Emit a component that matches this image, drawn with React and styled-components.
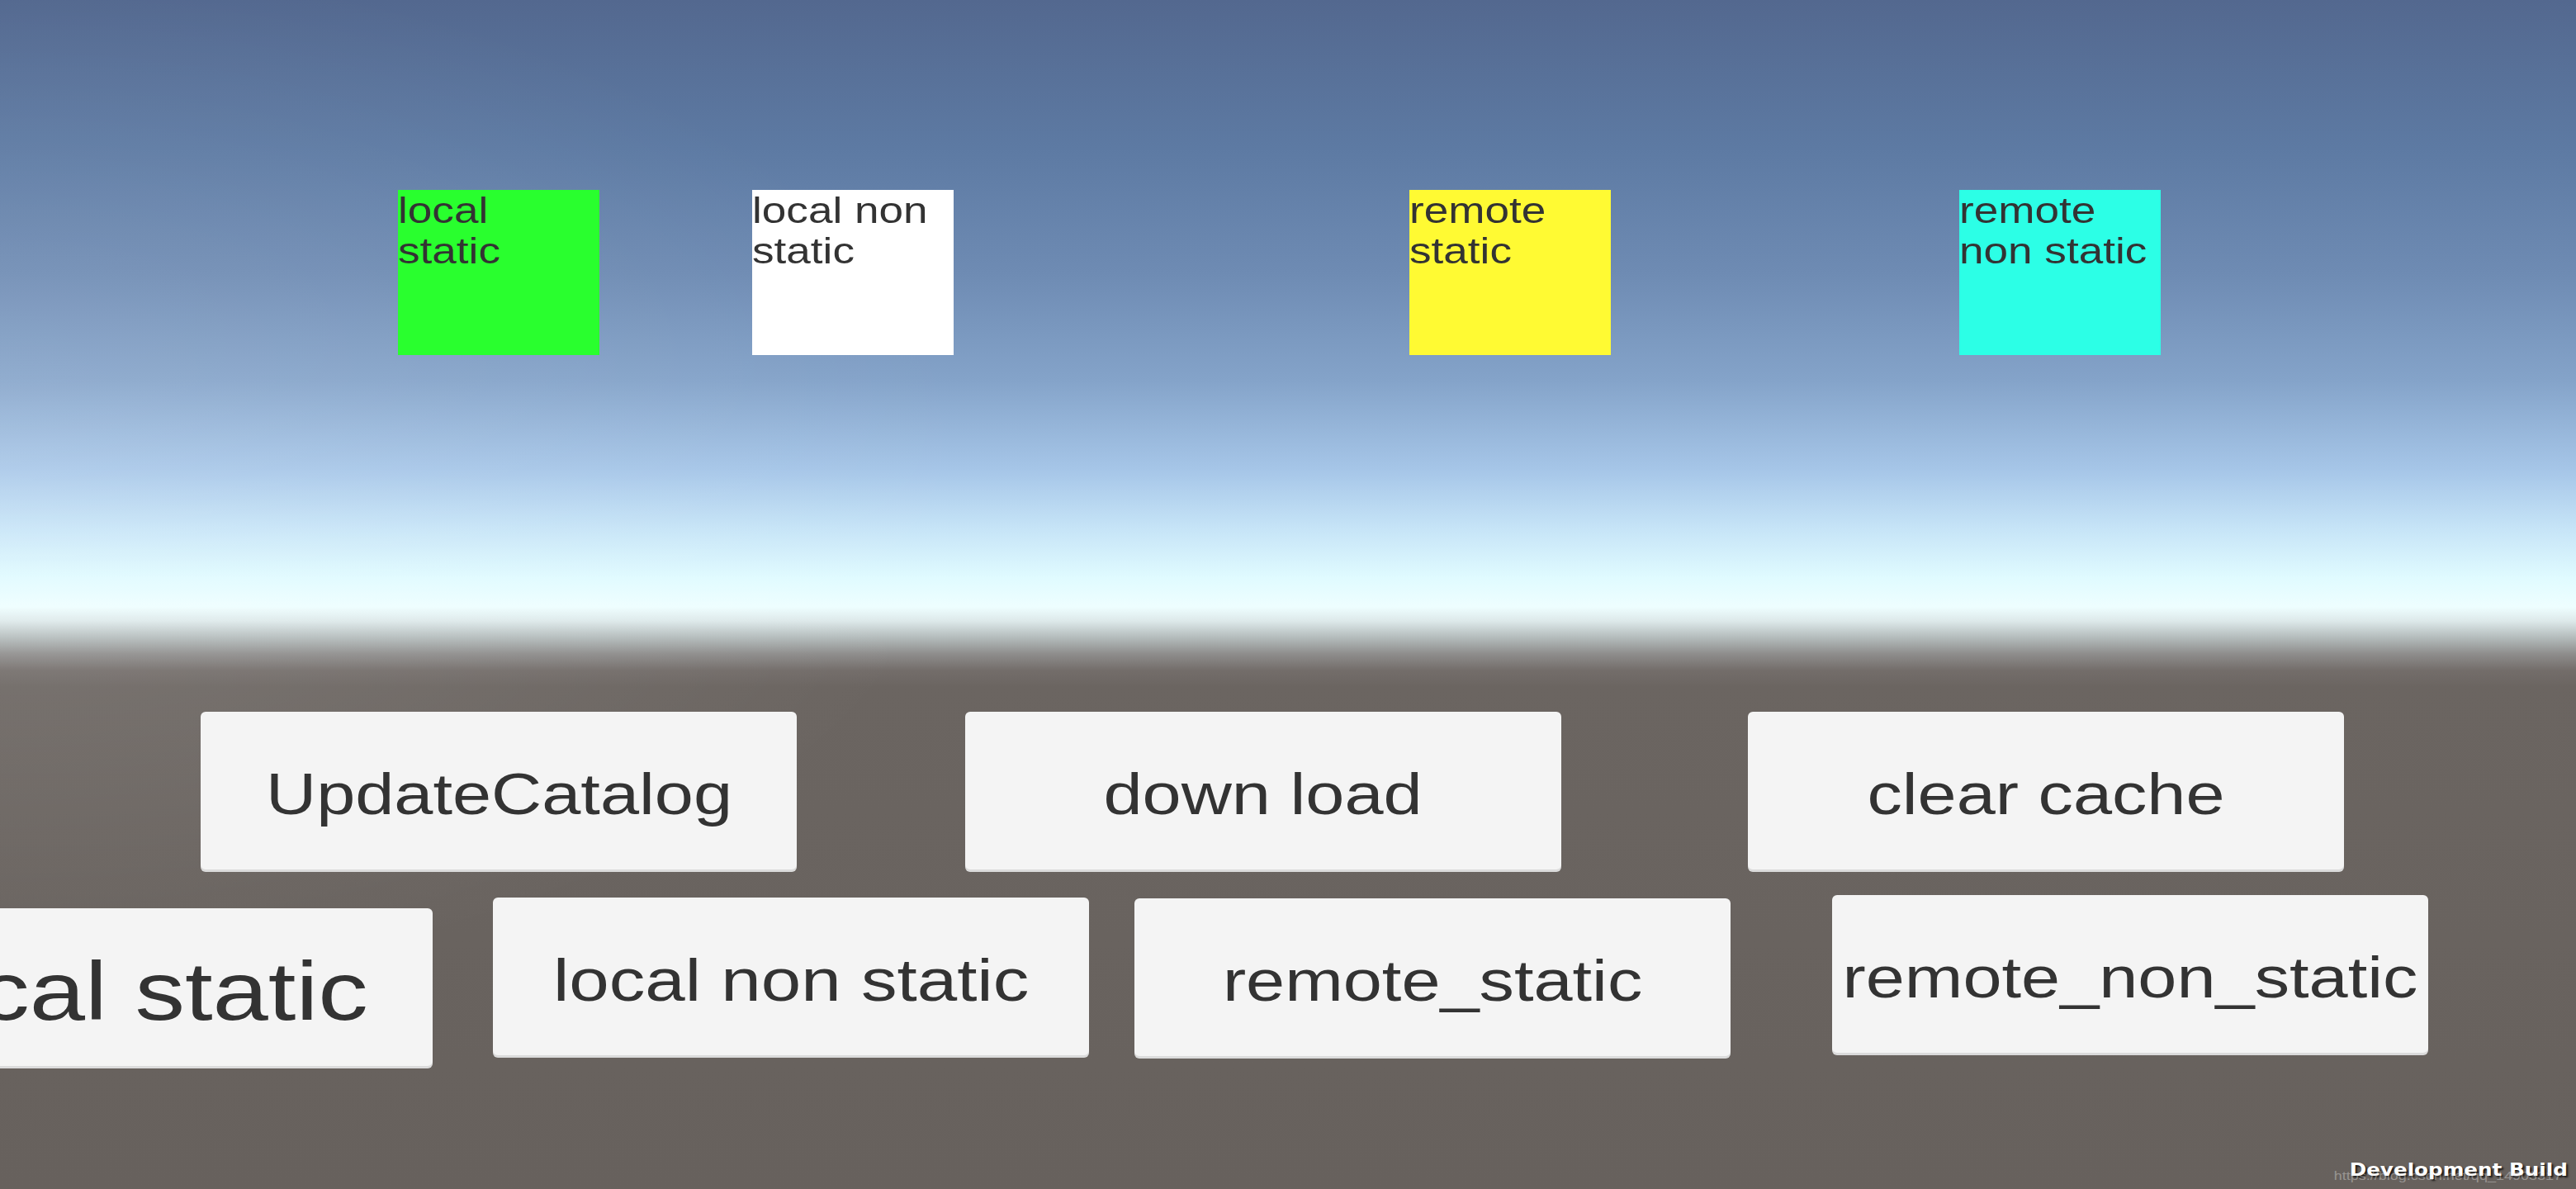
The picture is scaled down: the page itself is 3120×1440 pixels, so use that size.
import React from 'react';
import styled, { createGlobalStyle } from "styled-components";

const Global = createGlobalStyle`
html, body {
  margin: 0;
  padding: 0;
  background: #6b6561;
}
body {
  font-family: "Liberation Sans", Arial, sans-serif;
}`

const Scene = styled.div`
position: relative;
width: 3120px;
height: 1440px;
overflow: hidden;
display: flex;
flex-direction: column;
background:
  radial-gradient(ellipse 1700px 900px at 0% 40%, rgba(255,255,255,0.13), rgba(255,255,255,0) 70%),
  linear-gradient(to bottom,
    #53688f 0px,
    #5d7aa3 180px,
    #6e8bb3 330px,
    #84a3c9 460px,
    #a6c6e8 570px,
    #c6e4f7 640px,
    #e0fbff 700px,
    #eefeff 735px,
    #dde9ea 752px,
    #b4bcbc 772px,
    #8e8d8c 792px,
    #736d6a 812px,
    #6b6561 832px,
    #67615d 1440px);`

const SquareRow = styled.div`
display: flex;
align-items: flex-start;
padding: 230px 0 0 482px;`

const Square = styled.div`
flex: none;
width: 244px;
height: 200px;
margin-left: ${p => p.$gap || 0}px;
background: ${p => p.$color};`

const Caption = styled.div`
width: 204px;
font-size: 45px;
line-height: 49px;
color: #333333;
transform: scaleX(1.18);
transform-origin: 0 0;`

const ButtonRow = styled.div`
display: flex;
align-items: flex-start;
margin-top: ${p => p.$top}px;`

const Button = styled.div`
flex: none;
display: flex;
align-items: center;
justify-content: center;
box-sizing: border-box;
width: 722px;
height: 194px;
padding-top: 6px;
margin-left: ${p => p.$gap}px;
margin-top: ${p => p.$drop || 0}px;
background: #f4f4f4;
border-radius: 6px;
box-shadow: inset 0 -3px 0 rgba(0, 0, 0, 0.1);`

const Label = styled.span`
display: inline-block;
white-space: nowrap;
font-size: ${p => p.$size || 70}px;
color: #333333;
transform: scaleX(1.21);`

const Watermark = styled.div`
position: absolute;
right: 10px;
bottom: 8px;
display: flex;
flex-direction: column;
align-items: flex-end;`

const DevBuild = styled.div`
font-family: "DejaVu Sans", "Liberation Sans", sans-serif;
font-weight: bold;
font-size: 22px;
color: #ffffff;
text-shadow: 2px 2px 2px rgba(0,0,0,0.75);
transform: scaleX(1.12);
transform-origin: right center;`

const Url = styled.div`
margin-top: -14px;
padding-right: 6px;
font-size: 15px;
color: rgba(230, 230, 230, 0.4);
transform: scaleX(1.2);
transform-origin: right center;`

const squares = [
  { text: "local static", color: "#29ff2e", gap: 0 },
  { text: "local non static", color: "#ffffff", gap: 185 },
  { text: "remote static", color: "#fffa33", gap: 552 },
  { text: "remote non static", color: "#2cffe6", gap: 422 },
]

const topButtons = [
  { text: "UpdateCatalog", gap: 243 },
  { text: "down load", gap: 204 },
  { text: "clear cache", gap: 226 },
]

const bottomButtons = [
  { text: "local static", gap: -198, drop: 16, size: 100 },
  { text: "local non static", gap: 73, drop: 3, size: 72 },
  { text: "remote_static", gap: 55, drop: 4 },
  { text: "remote_non_static", gap: 123, drop: 0 },
]

const App = () => {
  return (
    <Scene>
      <Global />
      <SquareRow>
        {squares.map(s => (
          <Square key={s.text} $color={s.color} $gap={s.gap}>
            <Caption>{s.text}</Caption>
          </Square>
        ))}
      </SquareRow>
      <ButtonRow $top={432}>
        {topButtons.map(b => (
          <Button key={b.text} $gap={b.gap}>
            <Label>{b.text}</Label>
          </Button>
        ))}
      </ButtonRow>
      <ButtonRow $top={28}>
        {bottomButtons.map(b => (
          <Button key={b.text} $gap={b.gap} $drop={b.drop}>
            <Label $size={b.size}>{b.text}</Label>
          </Button>
        ))}
      </ButtonRow>
      <Watermark>
        <DevBuild>Development Build</DevBuild>
        <Url>https://blog.csdn.net/qq_14903317</Url>
      </Watermark>
    </Scene>
  )
}

export default App;
